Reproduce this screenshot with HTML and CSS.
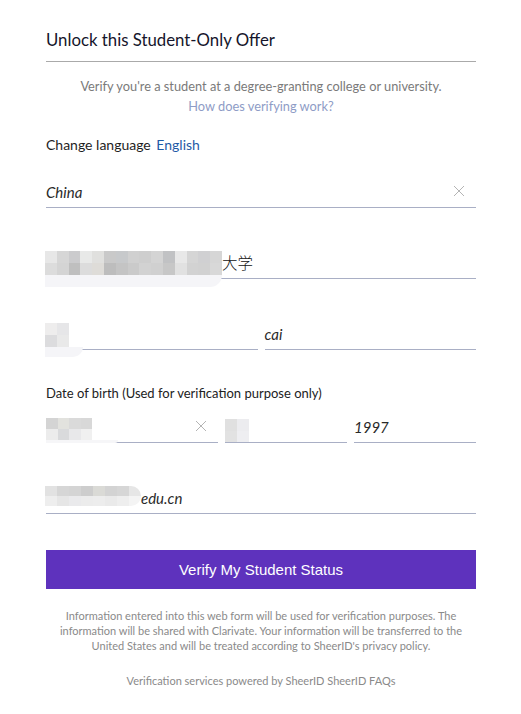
FILE: index.html
```html
<!DOCTYPE html>
<html lang="en">
<head>
<meta charset="utf-8">
<title>Unlock this Student-Only Offer</title>
<link rel="stylesheet" href="styles.css">
</head>
<body>
<main class="form">
  <h1 class="title">Unlock this Student-Only Offer</h1>
  <p class="intro">Verify you're a student at a degree-granting college or university.</p>
  <a class="how" href="#">How does verifying work?</a>

  <div class="lang">Change language <span class="lang-value">English</span></div>

  <div class="field">
    <span class="value">China</span>
    <svg class="clear" viewBox="0 0 12 12" width="12" height="12"><path d="M1 1 L11 11 M11 1 L1 11" stroke="#b4b4b4" stroke-width="1" fill="none"/></svg>
  </div>

  <div class="field">
    <span class="mosaic m-uni">
      <i style="background:#e7e7e7"></i><i style="background:#d6d6d6"></i><i style="background:#cbcbcd"></i><i style="background:#e8e9e8"></i><i style="background:#e0e0de"></i><i style="background:#c9c9c9"></i><i style="background:#c7c9cb"></i><i style="background:#d0d0d0"></i><i style="background:#cecece"></i><i style="background:#d4d4d4"></i><i style="background:#c1c2c4"></i><i style="background:#e8e8e8"></i><i style="background:#d5d5d5"></i><i style="background:#d0d0d2"></i><i style="background:#d6d6d6"></i>
      <i style="background:#dcdcdc"></i><i style="background:#d4d4d4"></i><i style="background:#bfbfbf"></i><i style="background:#dcdcdc"></i><i style="background:#dedcd8"></i><i style="background:#bdbdbd"></i><i style="background:#c4c4c4"></i><i style="background:#cacaca"></i><i style="background:#d2d2d2"></i><i style="background:#d0d0d0"></i><i style="background:#c7c7c7"></i><i style="background:#e1e1e1"></i><i style="background:#d2d2d2"></i><i style="background:#d1d1d1"></i><i style="background:#d8d8d8"></i>
    </span>
    <span class="value cjk">大学</span>
  </div>

  <div class="row two">
    <div class="field">
      <span class="mosaic m-first">
        <i style="background:#eeeded"></i><i style="background:#e6e6e8"></i>
        <i style="background:#dcdcde"></i><i style="background:#e9e9e9"></i>
      </span>
    </div>
    <div class="field"><span class="value">cai</span></div>
  </div>

  <div class="label">Date of birth (Used for verification purpose only)</div>
  <div class="row three">
    <div class="field">
      <span class="mosaic m-month">
        <i style="background:#d4d4d4"></i><i style="background:#e2e2de"></i><i style="background:#dadada"></i><i style="background:#d8d8d8"></i>
        <i style="background:#ececec"></i><i style="background:#d9dadc"></i><i style="background:#e8e8ea"></i><i style="background:#f0f0f0"></i>
      </span>
      <svg class="clear" viewBox="0 0 12 12" width="12" height="12"><path d="M1 1 L11 11 M11 1 L1 11" stroke="#b4b4b4" stroke-width="1" fill="none"/></svg>
    </div>
    <div class="field">
      <span class="mosaic m-day">
        <i style="background:#e0e0e0"></i><i style="background:#ececef"></i>
        <i style="background:#e2e2e2"></i><i style="background:#eeeef1"></i>
      </span>
    </div>
    <div class="field"><span class="value">1997</span></div>
  </div>

  <div class="field">
    <span class="mosaic m-mail">
      <i style="background:#e2e2e2"></i><i style="background:#d6d6d6"></i><i style="background:#d4d4d4"></i><i style="background:#cdcdcd"></i><i style="background:#dadad6"></i><i style="background:#d3d3d3"></i><i style="background:#d6d6d6"></i><i style="background:#e6e6e6"></i>
      <i style="background:#eeeeee"></i><i style="background:#e6e6e6"></i><i style="background:#eaeaec"></i><i style="background:#ececec"></i><i style="background:#ededed"></i><i style="background:#eaeaea"></i><i style="background:#eeeeee"></i><i style="background:#f4f4f4"></i>
    </span>
    <span class="value">edu.cn</span>
  </div>

  <button class="submit" type="button">Verify My Student Status</button>

  <p class="legal">Information entered into this web form will be used for verification purposes. The information will be shared with Clarivate. Your information will be transferred to the United States and will be treated according to SheerID's privacy policy.</p>

  <p class="powered">Verification services powered by SheerID SheerID FAQs</p>
</main>
</body>
</html>
```

FILE: styles.css
```css
html, body {
  margin: 0;
  padding: 0;
  background: #fff;
}

body {
  font-family: Lato, "Noto Sans", sans-serif;
  color: #222;
}

.form {
  width: 430px;
  margin-left: 46px;
  padding-top: 28px;
  display: flex;
  flex-direction: column;
}

.title {
  margin: 0;
  font-size: 16.8px;
  line-height: 24px;
  font-weight: 400;
  color: #15152b;
  padding-bottom: 9px;
  border-bottom: 1px solid #aaaaaa;
}

.intro {
  margin: 14px 0 0;
  font-size: 12.8px;
  line-height: 20px;
  color: #7a7a7a;
  text-align: center;
}

.how {
  font-size: 12.8px;
  line-height: 20px;
  color: #8e9cc6;
  text-align: center;
  text-decoration: none;
}

.lang {
  margin-top: 19px;
  font-size: 14px;
  line-height: 20px;
  color: #1e1e1e;
}

.lang-value {
  margin-left: 2px;
  color: #1f5aa6;
}

.field {
  margin-top: 40px;
  height: 30px;
  border-bottom: 1px solid #a9afc5;
  display: flex;
  align-items: center;
  min-width: 0;
}

.lang + .field { margin-top: 22px; }

.value {
  font-size: 15px;
  font-style: italic;
  color: #2a2a2a;
}

.cjk {
  font-family: "Noto Sans CJK SC", sans-serif;
  font-style: normal;
  font-weight: 300;
  font-size: 15.5px;
  margin-top: -3px;
  color: #111;
}

.clear {
  margin-left: auto;
  margin-right: 11px;
  margin-top: -2px;
}

.row {
  margin-top: 40px;
  display: grid;
  column-gap: 7px;
}

.row .field { margin-top: 0; }

.row.two { grid-template-columns: 1fr 1fr; }
.row.three { grid-template-columns: 172px 1fr 1fr; }

.label {
  margin-top: 33px;
  font-size: 13px;
  line-height: 20px;
  color: #222;
}

.label + .row { margin-top: 9px; }

/* pixelated redaction blocks */
.mosaic {
  display: grid;
  grid-auto-rows: 12px;
  position: relative;
  align-self: flex-end;
  flex: none;
}

.mosaic i { display: block; }

.mosaic::after {
  content: "";
  position: absolute;
  left: 0;
  top: 100%;
  background: #f5f5f8;
  border-bottom-right-radius: 14px;
}

.m-uni {
  grid-template-columns: repeat(15, 11.8px);
  margin-left: -1px;
  margin-bottom: 3px;
}
.m-uni::after { width: 100%; height: 12px; }

.m-first {
  grid-template-columns: repeat(2, 12px);
  margin-left: -1px;
  margin-bottom: 2px;
}
.m-first::after { width: 38px; height: 10px; }

.m-month {
  grid-template-columns: repeat(4, 11.5px);
  grid-auto-rows: 11px;
  margin-bottom: 2px;
}
.m-month::after { width: 72px; height: 3px; background: #f6f6f8; }

.m-day {
  grid-template-columns: repeat(2, 12px);
  margin-bottom: 0;
  grid-auto-rows: 11.5px;
}

.m-mail {
  grid-template-columns: repeat(8, 12px);
  grid-auto-rows: 10px;
  margin-left: -1px;
  margin-bottom: 7px;
  border-radius: 0 10px 10px 0;
  overflow: hidden;
}
.m-mail::after { display: none; }

.submit {
  margin-top: 36px;
  height: 39px;
  border: 0;
  background: #5e32bd;
  color: #fff;
  font-family: "Liberation Sans", Arial, sans-serif;
  font-size: 15px;
  cursor: pointer;
}

.legal {
  margin: 19px 0 0;
  font-size: 11px;
  line-height: 15px;
  color: #8a8a8a;
  text-align: center;
  padding: 0 8px;
}

.powered {
  margin: 20px 0 0;
  font-size: 11px;
  line-height: 15px;
  color: #8a8a8a;
  text-align: center;
}
```
